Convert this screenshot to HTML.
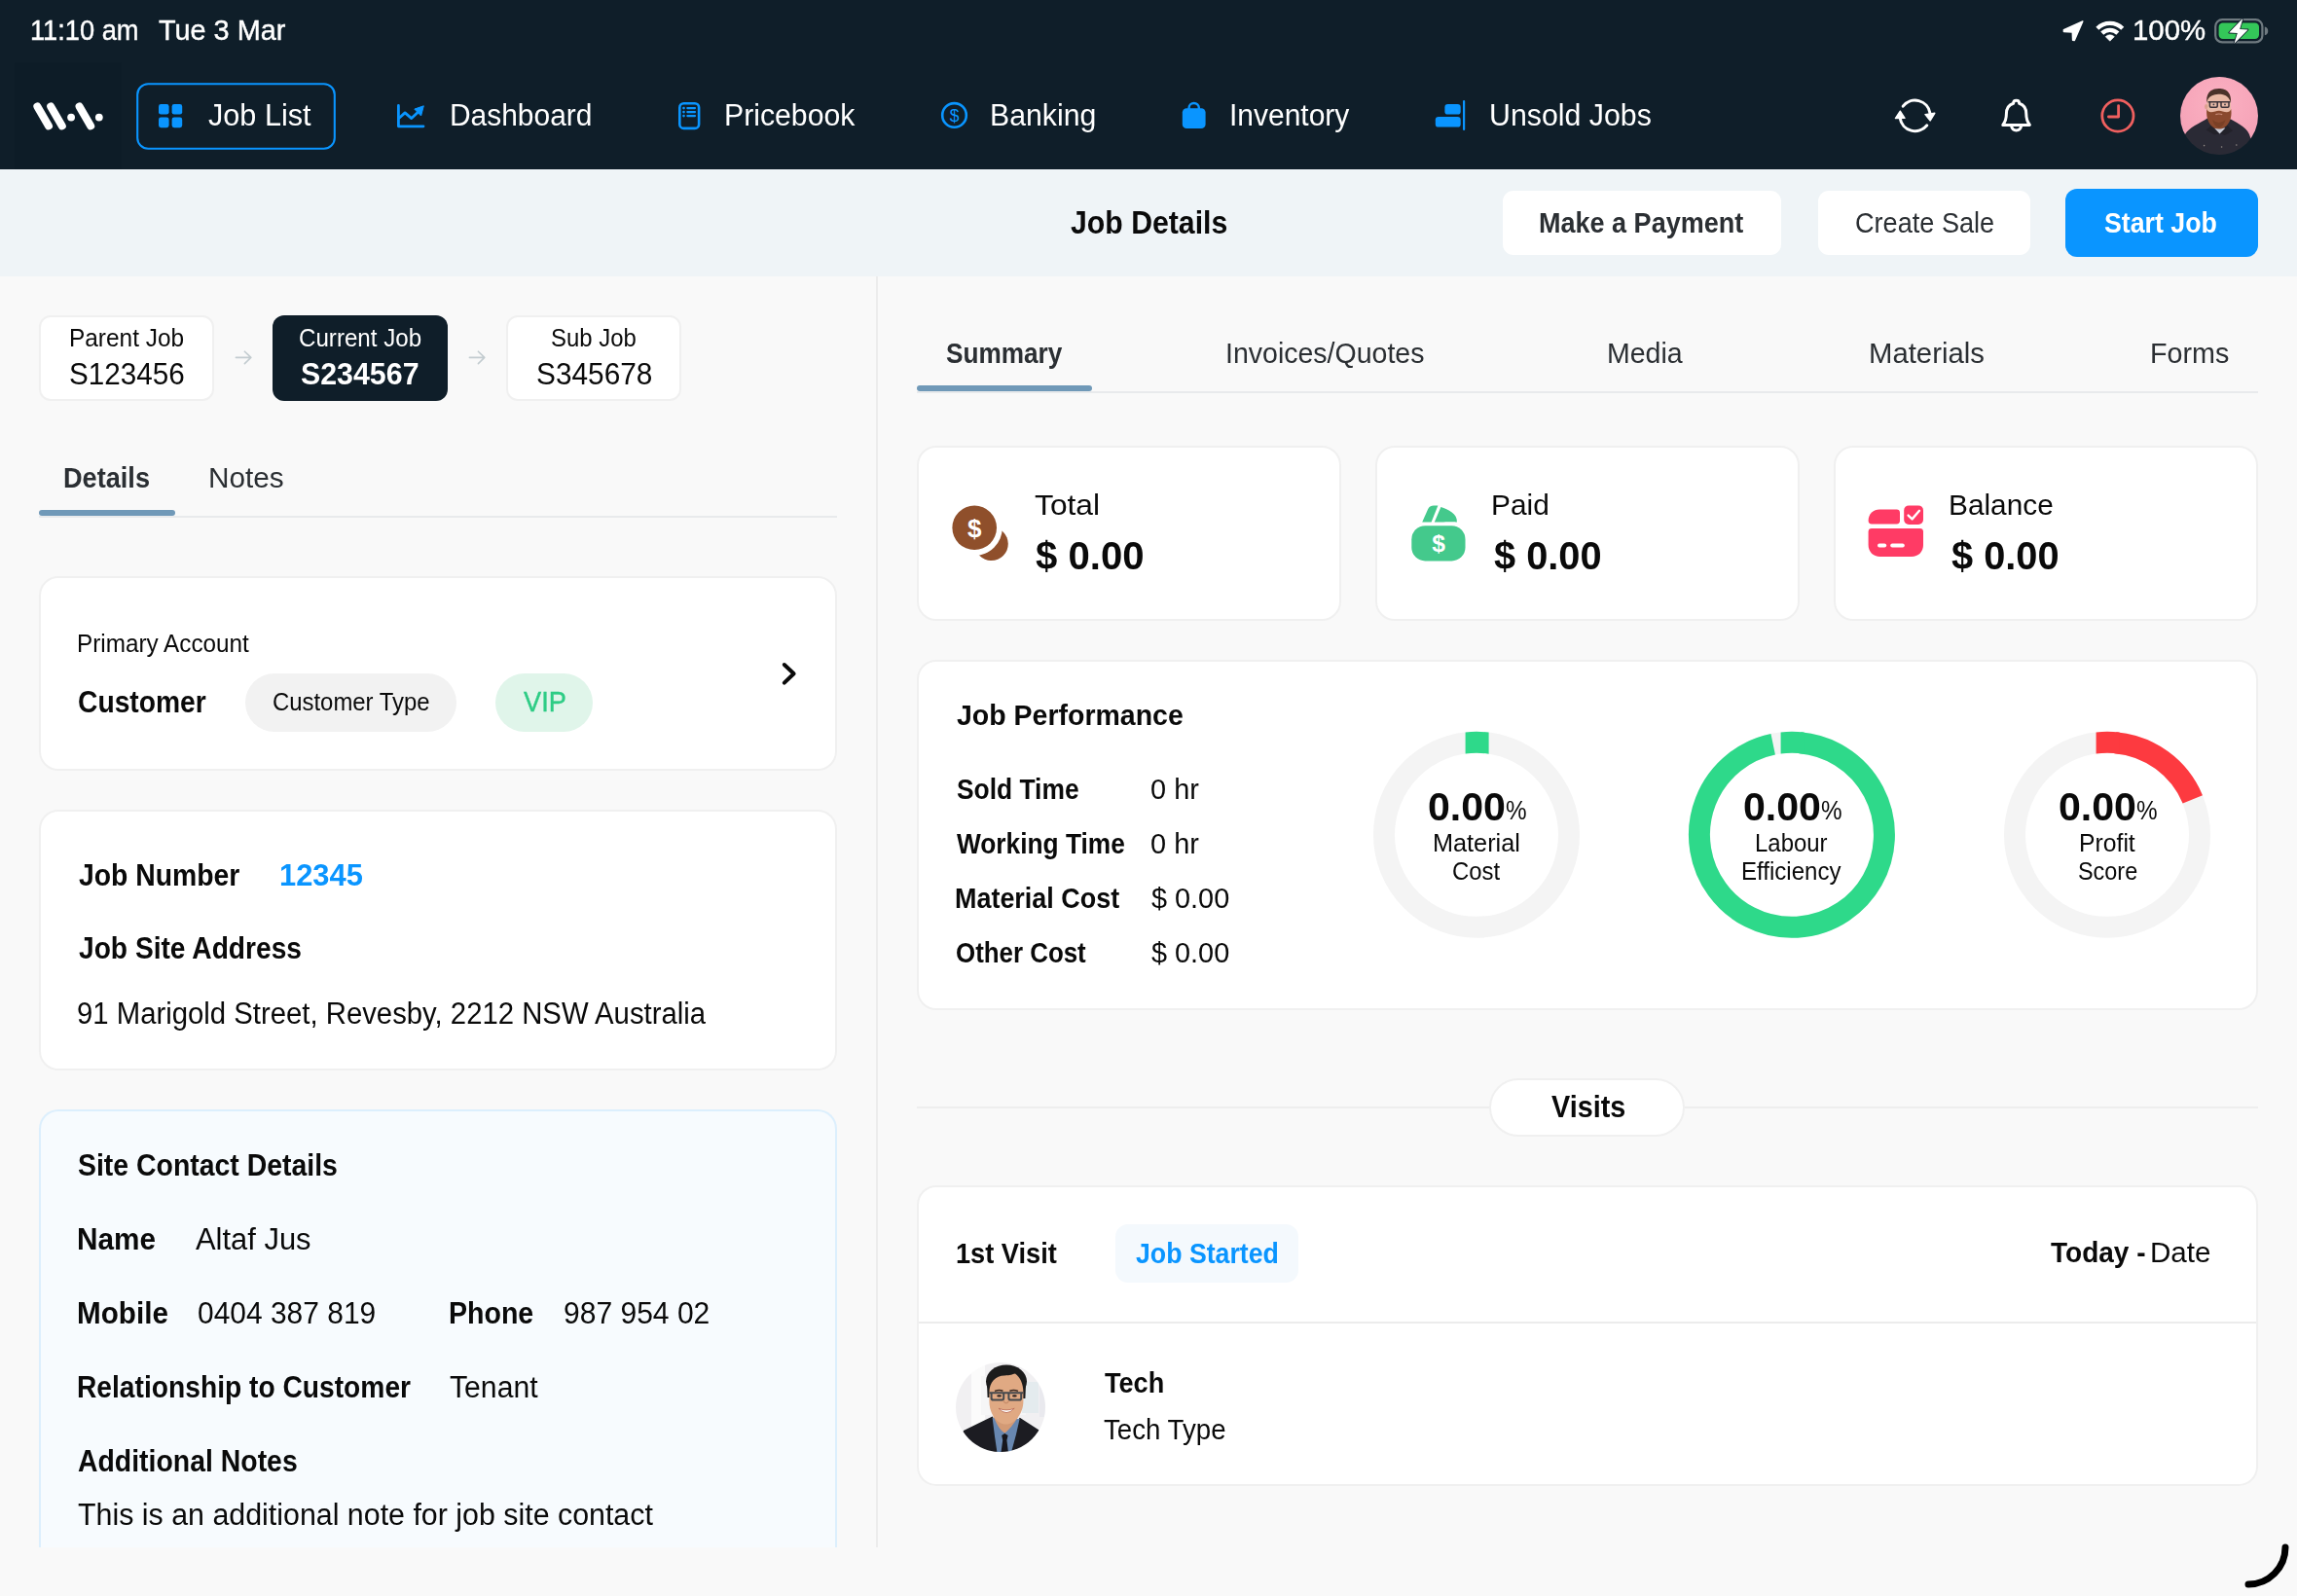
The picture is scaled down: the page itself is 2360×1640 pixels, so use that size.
<!DOCTYPE html>
<html lang="en">
<head>
<meta charset="utf-8">
<title>Job Details</title>
<style>
*{box-sizing:border-box;margin:0;padding:0}
html,body{width:2360px;height:1640px;overflow:hidden}
body{position:relative;background:#f9f9f9;font-family:"Liberation Sans",sans-serif;color:#0a0a0a}
.a{position:absolute}
.t{position:absolute;white-space:nowrap;line-height:1;transform-origin:0 0}
.card{position:absolute;background:#fff;border:2px solid #f0f0f0;border-radius:20px}
svg{position:absolute;overflow:visible}
</style>
</head>
<body>
<!-- top dark bar -->
<div class="a" style="left:0;top:0;width:2360px;height:174px;background:#0f1e29"></div>
<!-- sub header -->
<div class="a" style="left:0;top:174px;width:2360px;height:110px;background:#eff4f7"></div>
<!-- vertical divider -->
<div class="a" style="left:900px;top:284px;width:2px;height:1306px;background:#ececec"></div>

<!-- ===== status bar icons ===== -->
<svg style="left:0;top:0" width="2360" height="174" viewBox="0 0 2360 174">
  <!-- location arrow -->
  <path d="M2139.8 22 L2120.4 30.7 L2120.4 32.5 L2129.3 32.9 L2129.6 41.3 L2131.3 41.5 Z" fill="#fff" stroke="#fff" stroke-width="1.5" stroke-linejoin="round"/>
  <!-- wifi -->
  <g fill="none" stroke="#fff" stroke-width="4.3" stroke-linecap="butt">
    <path d="M2154.86 29.26 A18.3 18.3 0 0 1 2180.74 29.26"/>
    <path d="M2159.74 34.14 A11.4 11.4 0 0 1 2175.86 34.14"/>
  </g>
  <path d="M2163.27 37.67 A6.4 6.4 0 0 1 2172.33 37.67 L2167.8 42.2 Z" fill="#fff" stroke="#fff" stroke-width="0.6" stroke-linejoin="round"/>
  <!-- battery -->
  <rect x="2276.2" y="20.2" width="48.2" height="23.2" rx="7" fill="none" stroke="#6f7a80" stroke-width="2.2"/>
  <rect x="2279.6" y="23.6" width="41.4" height="16.4" rx="4.2" fill="#34c759"/>
  <path d="M2326.8 27.6 a4.4 4.4 0 0 1 0 8.6 Z" fill="#6f7a80"/>
  <path d="M2304.4 18.8 L2290.2 33.6 L2298.8 34 L2295.4 45 L2309.6 30.4 L2301.2 30 Z" fill="#fff" stroke="#0f1e29" stroke-width="1.6" stroke-linejoin="round" paint-order="stroke"/>

  <!-- ===== logo ===== -->
  <rect x="15" y="64" width="110" height="110" fill="#0d1c27"/>
  <g stroke="#fff" stroke-width="8" stroke-linecap="round">
    <line x1="38.4" y1="109.4" x2="50" y2="129.4"/>
    <line x1="52.2" y1="109.4" x2="63.8" y2="129.4"/>
    <line x1="81.6" y1="109.4" x2="93.2" y2="129.4"/>
  </g>
  <circle cx="73.1" cy="120.6" r="3.9" fill="#fff"/>
  <circle cx="101.8" cy="120.6" r="3.9" fill="#fff"/>

  <!-- Job List button -->
  <rect x="141.2" y="86.2" width="202.6" height="66.6" rx="11" fill="none" stroke="#0a95ff" stroke-width="2.1"/>
  <!-- grid icon -->
  <g fill="#0a95ff">
    <rect x="163" y="107" width="10.6" height="10.6" rx="2.4"/>
    <rect x="176.6" y="107" width="10.6" height="10.6" rx="2.4"/>
    <rect x="163" y="120.6" width="10.6" height="10.6" rx="2.4"/>
    <rect x="176.6" y="120.6" width="10.6" height="10.6" rx="2.4"/>
  </g>

  <!-- dashboard icon -->
  <g fill="none" stroke="#0a95ff" stroke-width="2.8" stroke-linecap="round" stroke-linejoin="round">
    <path d="M409.4 108.4 V129.8 H435"/>
    <path d="M410.4 121 L416.1 115.9 L422.8 121.6 L430 114.8"/>
  </g>
  <path d="M425.8 112.1 L435.3 108.8 L432.6 119 Z" fill="#0a95ff" stroke="#0a95ff" stroke-width="1" stroke-linejoin="round"/>

  <!-- pricebook icon -->
  <rect x="698.3" y="106.2" width="19.8" height="25.7" rx="4.2" fill="none" stroke="#0a95ff" stroke-width="2.6"/>
  <g fill="#0a95ff">
    <circle cx="702.5" cy="111.1" r="1.35"/><circle cx="702.5" cy="115.1" r="1.35"/><circle cx="702.5" cy="119.1" r="1.35"/>
    <rect x="705.2" y="110" width="9.9" height="2.2" rx="1.1"/>
    <rect x="705.2" y="114" width="9.9" height="2.2" rx="1.1"/>
    <rect x="705.2" y="118" width="9.9" height="2.2" rx="1.1"/>
  </g>

  <!-- banking icon -->
  <circle cx="980.5" cy="118.4" r="12.3" fill="none" stroke="#0a95ff" stroke-width="2.6"/>
  <text x="980.5" y="124.6" font-family="Liberation Sans, sans-serif" font-size="17.5" fill="#0a95ff" text-anchor="middle">$</text>

  <!-- inventory icon -->
  <rect x="1214.8" y="111.2" width="23.8" height="20.9" rx="4.4" fill="#0a95ff"/>
  <path d="M1221.6 112 V110.6 A5.1 4.6 0 0 1 1231.8 110.6 V112" fill="none" stroke="#0a95ff" stroke-width="2.4"/>

  <!-- unsold jobs icon -->
  <rect x="1484.4" y="107" width="16.3" height="10.6" rx="3.2" fill="#0a95ff"/>
  <rect x="1474.8" y="120" width="25.9" height="10.6" rx="3.2" fill="#0a95ff"/>
  <rect x="1503" y="103" width="2.2" height="31" rx="1.1" fill="#0a95ff"/>

  <!-- sync icon -->
  <g fill="none" stroke="#fff" stroke-width="3" stroke-linecap="round">
    <path d="M1955.2 109.2 A15.6 15.6 0 0 1 1983 116.4"/>
    <path d="M1979.8 128.8 A15.6 15.6 0 0 1 1952.2 121.4"/>
  </g>
  <path d="M1978 117.6 L1987.8 116.3 L1983.2 124 Z" fill="#fff" stroke="#fff" stroke-width="1.4" stroke-linejoin="round"/>
  <path d="M1947.4 121.6 L1952.3 114.2 L1957 121.4 Z" fill="#fff" stroke="#fff" stroke-width="1.4" stroke-linejoin="round"/>

  <!-- bell icon -->
  <g fill="none" stroke="#fff" stroke-width="3" stroke-linejoin="round" stroke-linecap="round">
    <path d="M2057.8 128.4 C2060.4 125 2061.4 122 2061.4 117 C2061.4 110.6 2064.6 107.4 2068.6 106.2 C2068.6 102.4 2074.6 102.4 2074.6 106.2 C2078.6 107.4 2081.8 110.6 2081.8 117 C2081.8 122 2082.8 125 2085.4 128.4 Z"/>
    <path d="M2066.6 129.4 A5.1 5.6 0 0 0 2076.6 129.4"/>
  </g>

  <!-- clock icon -->
  <g fill="none" stroke="#f0605f" stroke-width="2.8" stroke-linecap="round" stroke-linejoin="round">
    <circle cx="2175.9" cy="119" r="16.1"/>
    <path d="M2176.6 108.6 V120 H2166.4"/>
  </g>
</svg>

<!-- user avatar -->
<svg style="left:2240px;top:79px" width="80" height="80" viewBox="0 0 80 80">
  <defs><clipPath id="cpA"><circle cx="40" cy="40" r="40"/></clipPath><filter id="blA" x="-5%" y="-5%" width="110%" height="110%"><feGaussianBlur stdDeviation="0.5"/></filter>
  <radialGradient id="gA" cx="0.5" cy="0.35" r="0.75"><stop offset="0" stop-color="#fbb1c2"/><stop offset="1" stop-color="#f39db3"/></radialGradient></defs>
  <g clip-path="url(#cpA)"><g filter="url(#blA)">
    <rect x="-4" y="-4" width="88" height="88" fill="url(#gA)"/>
    <path d="M-2 84 L5 59 C9 52 20 48 28 42.6 L52 43.6 C60 48 70 53 72 62 L80 84 Z" fill="#2c2a35"/>
    <path d="M26.6 54.6 L33 49 L40.6 58 L48 49.4 L54 55.4 L46 60 L40.6 58.4 L35 59.4 Z" fill="#23212b"/>
    <path d="M35 52.6 L40.6 58.6 L46.4 52.6 Z" fill="#c9cdd8"/>
    <path d="M27.4 24 C27.4 16 32 13.4 39.6 13.4 C47 13.4 51.8 16 51.8 24 L52.2 36 C52.2 40 47 46 39.6 46 C32 46 27 40 27.2 36 Z" fill="#e8b9a6"/>
    <ellipse cx="26.6" cy="30.6" rx="1.6" ry="2.6" fill="#dca08e"/>
    <path d="M27.2 26.6 C26.4 15 33 12 39.6 12 C46.4 12 52.8 15 52 26.6 C50.4 20.6 46.6 18.6 43 18 C38 17.4 31.6 19 29.6 21.6 C28.4 23 27.8 24.6 27.2 26.6 Z" fill="#4a3029"/>
    <path d="M27.4 33 C28.6 37 32 36.4 36 35.6 C38 34.4 41.6 34.4 43.6 35.6 C47.6 36.4 51 37 52.2 33 C54 44 48 53.6 39.8 53.6 C31.6 53.6 25.8 44 27.4 33 Z" fill="#8a4a2d"/>
    <path d="M33 44 Q39.8 50 46.6 44 Q44 52 39.8 52 Q35.4 52 33 44 Z" fill="#7a3f26"/>
    <path d="M36.4 38.6 Q39.8 37.4 43.2 38.6" fill="none" stroke="#c98b7a" stroke-width="1.2"/>
    <path d="M28.6 25.8 H51.4 M30.4 25.8 V30 Q30.4 31.2 31.6 31.2 H37 Q38.2 31.2 38.2 30 V25.8 M42 25.8 V30 Q42 31.2 43.2 31.2 H48.8 Q50 31.2 50 30 V25.8" fill="none" stroke="#3a3038" stroke-width="1.5"/>
    <circle cx="34.4" cy="28.4" r="0.9" fill="#3b3a44"/><circle cx="46" cy="28.4" r="0.9" fill="#3b3a44"/>
    <circle cx="24.6" cy="70.6" r="0.8" fill="#8e8a86"/><circle cx="42.6" cy="72" r="0.8" fill="#8e8a86"/><circle cx="57.8" cy="70" r="0.8" fill="#8e8a86"/>
  </g></g>
</svg>
<!-- ===== header buttons ===== -->
<div class="a" style="left:1544px;top:196px;width:286px;height:66px;background:#fff;border-radius:11px"></div>
<div class="a" style="left:1868px;top:196px;width:218px;height:66px;background:#fff;border-radius:11px"></div>
<div class="a" style="left:2122px;top:194px;width:198px;height:70px;background:#0a95ff;border-radius:12px"></div>

<!-- ===== breadcrumb ===== -->
<div class="a" style="left:40px;top:324px;width:180px;height:88px;background:#fff;border:2px solid #f0f0f0;border-radius:12px"></div>
<div class="a" style="left:280px;top:324px;width:180px;height:88px;background:#0f1e29;border-radius:12px"></div>
<div class="a" style="left:520px;top:324px;width:180px;height:88px;background:#fff;border:2px solid #f0f0f0;border-radius:12px"></div>

<!-- left tabs -->
<div class="a" style="left:40px;top:530px;width:820px;height:2px;background:#e8eaec"></div>
<div class="a" style="left:40px;top:524px;width:140px;height:6px;background:#7099b8;border-radius:3px"></div>

<!-- primary account card -->
<div class="card" style="left:40px;top:592px;width:820px;height:200px"></div>
<div class="a" style="left:252px;top:692px;width:217px;height:59.5px;background:#f2f2f2;border-radius:30px"></div>
<div class="a" style="left:508.5px;top:692px;width:100.5px;height:59.5px;background:#e0f5ea;border-radius:30px"></div>

<!-- job card -->
<div class="card" style="left:40px;top:832px;width:820px;height:268px"></div>

<!-- site contact card (clipped at 1590) -->
<div class="a" style="left:40px;top:1140px;width:820px;height:450px;background:#f7fbfe;border:2px solid #dceffd;border-bottom:none;border-radius:20px 20px 0 0"></div>
<svg style="left:0;top:0" width="900" height="1640" viewBox="0 0 900 1640">
  <g fill="none" stroke="#c3ccd0" stroke-width="1.6" stroke-linecap="round" stroke-linejoin="round">
    <path d="M242.4 367.4 H257.6 M251.4 361.2 L257.8 367.4 L251.4 373.6"/>
    <path d="M482.4 367.4 H497.6 M491.4 361.2 L497.8 367.4 L491.4 373.6"/>
  </g>
  <!-- chevron -->
  <path d="M805.8 683 L815.6 692.3 L805.8 701.6" fill="none" stroke="#0a0a0a" stroke-width="4" stroke-linecap="round" stroke-linejoin="round"/>
</svg>
<!-- ===== right tabs ===== -->
<div class="a" style="left:942px;top:402px;width:1378px;height:2px;background:#e8eaec"></div>
<div class="a" style="left:942px;top:396px;width:180px;height:6px;background:#7099b8;border-radius:3px"></div>

<!-- stat cards -->
<div class="card" style="left:942px;top:458px;width:436px;height:180px"></div>
<div class="card" style="left:1413px;top:458px;width:436px;height:180px"></div>
<div class="card" style="left:1884px;top:458px;width:436px;height:180px"></div>

<svg style="left:0;top:0" width="2360" height="1640" viewBox="0 0 2360 1640">
  <!-- total icon -->
  <circle cx="1018.6" cy="558.8" r="17.2" fill="#8f4f2b"/>
  <circle cx="1001.2" cy="542.3" r="28.6" fill="#fff"/>
  <circle cx="1001.2" cy="542.3" r="22.8" fill="#8f4f2b"/>
  <text x="1001.2" y="551.6" font-family="Liberation Sans, sans-serif" font-weight="700" font-size="26" fill="#fff" text-anchor="middle">$</text>

  <!-- paid icon -->
  <rect x="1450.3" y="540.2" width="55.2" height="36.2" rx="14" fill="#44c98c"/>
  <path d="M1461.2 536.4 L1467.2 523 C1468.6 520 1470.6 519.4 1473 519.4 L1477.4 519.6 L1470.6 536.4 Z" fill="#44c98c"/>
  <path d="M1473.8 536.4 L1480.4 521 C1488 523.6 1497.6 527.6 1496.9 536.6 C1494 535.8 1490 536.4 1473.8 536.4 Z" fill="#44c98c"/>
  <text x="1478" y="566.8" font-family="Liberation Sans, sans-serif" font-weight="700" font-size="24.5" fill="#fff" text-anchor="middle">$</text>

  <!-- balance icon -->
  <path d="M1919.6 535 C1919.6 527.6 1925 523.4 1931 523.4 H1948.6 Q1952 523.4 1952 526.8 V535 Q1952 538.4 1948.6 538.4 H1923 Q1919.6 538.4 1919.6 535 Z" fill="#ff3b65"/>
  <rect x="1956.2" y="519.4" width="19.8" height="19.6" rx="5" fill="#ff3b65"/>
  <path d="M1960.6 529.6 L1964.6 533.4 L1972 524.8" fill="none" stroke="#fff" stroke-width="2.4" stroke-linecap="round" stroke-linejoin="round"/>
  <path d="M1919.6 546.4 Q1919.6 543 1923 543 H1972.6 Q1976 543 1976 546.4 V560 C1976 567 1971 572 1964 572 H1931.6 C1924.6 572 1919.6 567 1919.6 560 Z" fill="#ff3b65"/>
  <rect x="1929" y="558.4" width="9.2" height="4.1" rx="2" fill="#fff"/>
  <rect x="1942.2" y="558.4" width="14.6" height="4.1" rx="2" fill="#fff"/>
</svg>

<!-- performance card -->
<div class="card" style="left:942px;top:678px;width:1378px;height:360px"></div>
<svg style="left:0;top:0" width="2360" height="1640" viewBox="0 0 2360 1640">
  <!-- donut 1 -->
  <circle cx="1517" cy="857.8" r="95" fill="none" stroke="#f4f4f4" stroke-width="22"/>
  <path d="M1505.6 752.41 A106 106 0 0 1 1529.6 752.55 L1529.6 774.75 A84 84 0 0 0 1505.6 774.58 Z" fill="#2ed98a"/>
  <!-- donut 2 -->
  <circle cx="1841" cy="857.8" r="95" fill="none" stroke="#f4f4f4" stroke-width="22"/>
  <path d="M1849.3 763.2 A95 95 0 1 1 1821.7 764.8" fill="none" stroke="#2ed98a" stroke-width="22"/>
  <path d="M1829.6 752.41 A106 106 0 0 1 1853.6 752.55 L1853.6 774.75 A84 84 0 0 0 1829.6 774.58 Z" fill="#2ed98a"/>
  <!-- donut 3 -->
  <circle cx="2165" cy="857.8" r="95" fill="none" stroke="#f4f4f4" stroke-width="22"/>
  <path d="M2173.3 763.2 A95 95 0 0 1 2252.8 821.4" fill="none" stroke="#fd3a40" stroke-width="22"/>
  <path d="M2153.6 752.41 A106 106 0 0 1 2177.6 752.55 L2177.6 774.75 A84 84 0 0 0 2153.6 774.58 Z" fill="#fd3a40"/>
</svg>

<!-- visits divider -->
<div class="a" style="left:942px;top:1137px;width:1378px;height:2px;background:#eeeeee"></div>
<div class="a" style="left:1530px;top:1108px;width:201px;height:60px;background:#fff;border:2px solid #f0f0f0;border-radius:30px"></div>

<!-- visit card -->
<div class="card" style="left:942px;top:1218px;width:1378px;height:309px"></div>
<div class="a" style="left:944px;top:1358px;width:1374px;height:2px;background:#ececec"></div>
<div class="a" style="left:1146px;top:1258px;width:188px;height:60px;background:#f4f9fd;border-radius:13px"></div>

<!-- tech avatar -->
<svg style="left:982px;top:1400.3px" width="92" height="92" viewBox="0 0 92 92">
  <defs><clipPath id="cpB"><circle cx="46" cy="46" r="46"/></clipPath><filter id="blB" x="-5%" y="-5%" width="110%" height="110%"><feGaussianBlur stdDeviation="0.55"/></filter></defs>
  <g clip-path="url(#cpB)"><g filter="url(#blB)">
    <rect x="-4" y="-4" width="100" height="100" fill="#f1f0f2"/>
    <rect x="16" y="-4" width="14" height="100" fill="#fbfbfb"/>
    <rect x="26" y="14" width="46" height="40" fill="#f6f6f7"/>
    <rect x="68" y="20" width="17" height="32" fill="#e4ebee"/>
    <rect x="86" y="14" width="10" height="42" fill="#e9e9ee"/>
    <path d="M-4 96 L8 70 L37.6 55.6 L51 75 L65.8 56.8 L85.5 69.5 L96 96 Z" fill="#1b1e22"/>
    <path d="M37.6 57 L65.6 58 L62 74 L56 96 L43 96 L40 76 Z" fill="#6787b0"/>
    <path d="M38.5 55 C43 66 46 70 50.3 72.6 C55 69 59 64 64 56 Z" fill="#d39a75"/>
    <path d="M47.2 75 L50.3 73 L53.6 75 L52.4 80 L54.4 96 L46 96 L48.2 80 Z" fill="#15171a"/>
    <ellipse cx="52" cy="19.5" rx="21" ry="17" fill="#1c1b1c"/>
    <path d="M32 22 L32.6 36 L36 36 L36 22 Z M72 22 L71.4 37 L68 37 L68 22 Z" fill="#1c1b1c"/>
    <path d="M34.4 31 C34.4 20 41 13.4 50 13.4 C56 13.4 58 12.4 61 11.6 C66 15 69.4 22 69.4 31 L69.4 40 C69.4 52 61 63.6 51.6 63.6 C42 63.6 34.4 52 34.4 40 Z" fill="#e0a983"/>
    <path d="M40 29.4 Q44.6 27.6 48.4 29.2 M55.4 29.2 Q59.6 27.6 64 29.4" fill="none" stroke="#3a2a22" stroke-width="1.5"/>
    <ellipse cx="44.6" cy="34.4" rx="2.4" ry="1.1" fill="#2a2220"/><ellipse cx="60.4" cy="34.4" rx="2.4" ry="1.1" fill="#2a2220"/>
    <path d="M34.4 31.2 H69.4 M36.6 31.2 V36.8 Q36.6 38.6 38.4 38.6 H47.4 Q49.2 38.6 49.2 36.8 V31.2 M54.4 31.2 V36.8 Q54.4 38.6 56.2 38.6 H65.4 Q67.2 38.6 67.2 36.8 V31.2" fill="none" stroke="#45484d" stroke-width="2"/>
    <path d="M48.6 39 Q51.6 44.6 55 39" fill="none" stroke="#c98f6c" stroke-width="1.4"/>
    <path d="M44 47.2 Q52 50.6 60.2 47.2 Q52 56 44 47.2 Z" fill="#fff" stroke="#b8644c" stroke-width="0.8"/>
  </g></g>
</svg>

<!-- bottom-right arc -->
<svg style="left:0;top:0" width="2360" height="1640" viewBox="0 0 2360 1640">
  <path d="M2348 1590 A38 38 0 0 1 2310 1628" fill="none" stroke="#000" stroke-width="7" stroke-linecap="round"/>
</svg>

<span class="t" style="left:31.1px;top:17.3px;font-size:29.0px;color:#ffffff;transform:scaleX(0.9390);-webkit-text-stroke:0.4px #ffffff">11:10 am</span>
<span class="t" style="left:163.0px;top:17.3px;font-size:29.0px;color:#ffffff;transform:scaleX(0.9940);-webkit-text-stroke:0.4px #ffffff">Tue 3 Mar</span>
<span class="t" style="left:2190.8px;top:17.2px;font-size:29.0px;color:#ffffff;transform:scaleX(1.0141);-webkit-text-stroke:0.4px #ffffff">100%</span>
<span class="t" style="left:213.5px;top:103.1px;font-size:31.0px;color:#ffffff;transform:scaleX(0.9882)">Job List</span>
<span class="t" style="left:461.5px;top:103.1px;font-size:31.0px;color:#ffffff;transform:scaleX(0.9655)">Dashboard</span>
<span class="t" style="left:744.3px;top:103.1px;font-size:31.0px;color:#ffffff;transform:scaleX(0.9749)">Pricebook</span>
<span class="t" style="left:1017.0px;top:103.1px;font-size:31.0px;color:#ffffff;transform:scaleX(0.9753)">Banking</span>
<span class="t" style="left:1263.1px;top:103.1px;font-size:31.0px;color:#ffffff;transform:scaleX(0.9673)">Inventory</span>
<span class="t" style="left:1530.3px;top:103.1px;font-size:31.0px;color:#ffffff;transform:scaleX(0.9780)">Unsold Jobs</span>
<span class="t" style="left:1099.9px;top:211.9px;font-size:33.0px;color:#0a0a0a;transform:scaleX(0.9158);font-weight:700">Job Details</span>
<span class="t" style="left:1581.4px;top:215.0px;font-size:29.0px;color:#2b2f33;transform:scaleX(0.9315);font-weight:700">Make a Payment</span>
<span class="t" style="left:1905.8px;top:215.0px;font-size:29.0px;color:#2b2f33;transform:scaleX(0.9349)">Create Sale</span>
<span class="t" style="left:2162.3px;top:215.0px;font-size:29.0px;color:#ffffff;transform:scaleX(0.9213);font-weight:700">Start Job</span>
<span class="t" style="left:70.7px;top:334.6px;font-size:25.0px;color:#0a0a0a;transform:scaleX(0.9767)">Parent Job</span>
<span class="t" style="left:71.1px;top:368.9px;font-size:31.0px;color:#0a0a0a;transform:scaleX(0.9574)">S123456</span>
<span class="t" style="left:306.5px;top:334.6px;font-size:25.0px;color:#ffffff;transform:scaleX(0.9655)">Current Job</span>
<span class="t" style="left:309.2px;top:368.9px;font-size:31.0px;color:#ffffff;transform:scaleX(0.9789);font-weight:700">S234567</span>
<span class="t" style="left:565.9px;top:334.6px;font-size:25.0px;color:#0a0a0a;transform:scaleX(0.9562)">Sub Job</span>
<span class="t" style="left:551.1px;top:368.9px;font-size:31.0px;color:#0a0a0a;transform:scaleX(0.9623)">S345678</span>
<span class="t" style="left:64.7px;top:476.1px;font-size:30.0px;color:#2b2f33;transform:scaleX(0.9046);font-weight:700">Details</span>
<span class="t" style="left:213.8px;top:476.1px;font-size:30.0px;color:#2b2f33;transform:scaleX(0.9922)">Notes</span>
<span class="t" style="left:78.6px;top:648.7px;font-size:25.0px;color:#0a0a0a;transform:scaleX(0.9713)">Primary Account</span>
<span class="t" style="left:79.6px;top:705.6px;font-size:31.0px;color:#0a0a0a;transform:scaleX(0.9108);font-weight:700">Customer</span>
<span class="t" style="left:279.6px;top:708.8px;font-size:25.0px;color:#0a0a0a;transform:scaleX(0.9556)">Customer Type</span>
<span class="t" style="left:537.8px;top:707.0px;font-size:29.0px;color:#2ecc85;transform:scaleX(0.9379);-webkit-text-stroke:0.4px #2ecc85">VIP</span>
<span class="t" style="left:80.7px;top:883.8px;font-size:31.0px;color:#0a0a0a;transform:scaleX(0.9146);font-weight:700">Job Number</span>
<span class="t" style="left:286.8px;top:883.8px;font-size:31.0px;color:#0a95ff;transform:scaleX(0.9965);font-weight:700">12345</span>
<span class="t" style="left:80.7px;top:959.4px;font-size:31.0px;color:#0a0a0a;transform:scaleX(0.9084);font-weight:700">Job Site Address</span>
<span class="t" style="left:79.1px;top:1025.8px;font-size:31.0px;color:#0a0a0a;transform:scaleX(0.9453)">91 Marigold Street, Revesby, 2212 NSW Australia</span>
<span class="t" style="left:80.1px;top:1182.1px;font-size:31.0px;color:#0a0a0a;transform:scaleX(0.9168);font-weight:700">Site Contact Details</span>
<span class="t" style="left:78.6px;top:1257.8px;font-size:31.0px;color:#0a0a0a;transform:scaleX(0.9593);font-weight:700">Name</span>
<span class="t" style="left:200.8px;top:1257.8px;font-size:31.0px;color:#0a0a0a;transform:scaleX(0.9973)">Altaf Jus</span>
<span class="t" style="left:78.6px;top:1333.8px;font-size:31.0px;color:#0a0a0a;transform:scaleX(0.9565);font-weight:700">Mobile</span>
<span class="t" style="left:203.0px;top:1333.8px;font-size:31.0px;color:#0a0a0a;transform:scaleX(0.9663)">0404 387 819</span>
<span class="t" style="left:460.7px;top:1333.8px;font-size:31.0px;color:#0a0a0a;transform:scaleX(0.9205);font-weight:700">Phone</span>
<span class="t" style="left:578.7px;top:1333.8px;font-size:31.0px;color:#0a0a0a;transform:scaleX(0.9689)">987 954 02</span>
<span class="t" style="left:78.7px;top:1410.0px;font-size:31.0px;color:#0a0a0a;transform:scaleX(0.9095);font-weight:700">Relationship to Customer</span>
<span class="t" style="left:462.0px;top:1410.0px;font-size:31.0px;color:#0a0a0a;transform:scaleX(0.9731)">Tenant</span>
<span class="t" style="left:80.1px;top:1486.0px;font-size:31.0px;color:#0a0a0a;transform:scaleX(0.9164);font-weight:700">Additional Notes</span>
<span class="t" style="left:80.0px;top:1541.2px;font-size:31.0px;color:#0a0a0a;transform:scaleX(0.9797)">This is an additional note for job site contact</span>
<span class="t" style="left:971.5px;top:348.8px;font-size:29.0px;color:#2b2f33;transform:scaleX(0.9029);font-weight:700">Summary</span>
<span class="t" style="left:1259.0px;top:348.8px;font-size:29.0px;color:#2b2f33;transform:scaleX(0.9831)">Invoices/Quotes</span>
<span class="t" style="left:1650.6px;top:348.8px;font-size:29.0px;color:#2b2f33;transform:scaleX(0.9830)">Media</span>
<span class="t" style="left:1919.9px;top:348.8px;font-size:29.0px;color:#2b2f33;transform:scaleX(1.0107)">Materials</span>
<span class="t" style="left:2208.6px;top:348.8px;font-size:29.0px;color:#2b2f33;transform:scaleX(0.9901)">Forms</span>
<span class="t" style="left:1062.9px;top:505.3px;font-size:29.0px;color:#0a0a0a;transform:scaleX(1.0952)">Total</span>
<span class="t" style="left:1064.1px;top:549.9px;font-size:41.5px;color:#0a0a0a;transform:scaleX(0.9666);font-weight:700">$ 0.00</span>
<span class="t" style="left:1532.4px;top:505.3px;font-size:29.0px;color:#0a0a0a;transform:scaleX(1.0305)">Paid</span>
<span class="t" style="left:1535.4px;top:549.9px;font-size:41.5px;color:#0a0a0a;transform:scaleX(0.9587);font-weight:700">$ 0.00</span>
<span class="t" style="left:2002.4px;top:505.3px;font-size:29.0px;color:#0a0a0a;transform:scaleX(1.0280)">Balance</span>
<span class="t" style="left:2005.4px;top:549.9px;font-size:41.5px;color:#0a0a0a;transform:scaleX(0.9587);font-weight:700">$ 0.00</span>
<span class="t" style="left:983.1px;top:721.2px;font-size:29.0px;color:#0a0a0a;transform:scaleX(0.9827);font-weight:700">Job Performance</span>
<span class="t" style="left:982.7px;top:797.2px;font-size:29.0px;color:#0a0a0a;transform:scaleX(0.9096);font-weight:700">Sold Time</span>
<span class="t" style="left:1182.4px;top:797.2px;font-size:29.0px;color:#0a0a0a;transform:scaleX(0.9975)">0 hr</span>
<span class="t" style="left:983.1px;top:853.1px;font-size:29.0px;color:#0a0a0a;transform:scaleX(0.9060);font-weight:700">Working Time</span>
<span class="t" style="left:1182.4px;top:853.1px;font-size:29.0px;color:#0a0a0a;transform:scaleX(0.9975)">0 hr</span>
<span class="t" style="left:981.4px;top:909.1px;font-size:29.0px;color:#0a0a0a;transform:scaleX(0.9287);font-weight:700">Material Cost</span>
<span class="t" style="left:1183.3px;top:909.1px;font-size:29.0px;color:#0a0a0a;transform:scaleX(0.9949)">$ 0.00</span>
<span class="t" style="left:982.3px;top:965.0px;font-size:29.0px;color:#0a0a0a;transform:scaleX(0.8925);font-weight:700">Other Cost</span>
<span class="t" style="left:1183.3px;top:965.0px;font-size:29.0px;color:#0a0a0a;transform:scaleX(0.9949)">$ 0.00</span>
<span class="t" style="left:1593.5px;top:1121.9px;font-size:31.0px;color:#0a0a0a;transform:scaleX(0.9284);font-weight:700">Visits</span>
<span class="t" style="left:981.8px;top:1273.9px;font-size:29.0px;color:#0a0a0a;transform:scaleX(0.9371);font-weight:700">1st Visit</span>
<span class="t" style="left:1167.0px;top:1273.9px;font-size:29.0px;color:#0a95ff;transform:scaleX(0.9209);font-weight:700">Job Started</span>
<span class="t" style="left:2107.0px;top:1273.0px;font-size:29.0px;color:#0a0a0a;transform:scaleX(0.9658);font-weight:700">Today -</span>
<span class="t" style="left:2209.4px;top:1273.0px;font-size:29.0px;color:#0a0a0a;transform:scaleX(1.0205)">Date</span>
<span class="t" style="left:1134.8px;top:1406.7px;font-size:29.0px;color:#0a0a0a;transform:scaleX(0.9340);font-weight:700">Tech</span>
<span class="t" style="left:1134.4px;top:1455.2px;font-size:29.0px;color:#0a0a0a;transform:scaleX(0.9536)">Tech Type</span>
<span class="t" style="left:1466.5px;top:807.7px;font-size:41.5px;color:#0a0a0a;transform:scaleX(0.9898);font-weight:700">0.00</span>
<span class="t" style="left:1547.4px;top:819.9px;font-size:27.0px;color:#0a0a0a;transform:scaleX(0.8990)">%</span>
<span class="t" style="left:1472.4px;top:853.8px;font-size:25.0px;color:#0a0a0a;transform:scaleX(1.0104)">Material</span>
<span class="t" style="left:1492.3px;top:882.5px;font-size:25.0px;color:#0a0a0a;transform:scaleX(0.9559)">Cost</span>
<span class="t" style="left:1790.5px;top:807.7px;font-size:41.5px;color:#0a0a0a;transform:scaleX(0.9898);font-weight:700">0.00</span>
<span class="t" style="left:1871.4px;top:819.9px;font-size:27.0px;color:#0a0a0a;transform:scaleX(0.8990)">%</span>
<span class="t" style="left:1803.3px;top:853.8px;font-size:25.0px;color:#0a0a0a;transform:scaleX(0.9582)">Labour</span>
<span class="t" style="left:1789.3px;top:882.5px;font-size:25.0px;color:#0a0a0a;transform:scaleX(0.9620)">Efficiency</span>
<span class="t" style="left:2114.5px;top:807.7px;font-size:41.5px;color:#0a0a0a;transform:scaleX(0.9898);font-weight:700">0.00</span>
<span class="t" style="left:2195.4px;top:819.9px;font-size:27.0px;color:#0a0a0a;transform:scaleX(0.8990)">%</span>
<span class="t" style="left:2135.6px;top:853.8px;font-size:25.0px;color:#0a0a0a;transform:scaleX(0.9897)">Profit</span>
<span class="t" style="left:2135.0px;top:882.5px;font-size:25.0px;color:#0a0a0a;transform:scaleX(0.9368)">Score</span>
</body>
</html>
